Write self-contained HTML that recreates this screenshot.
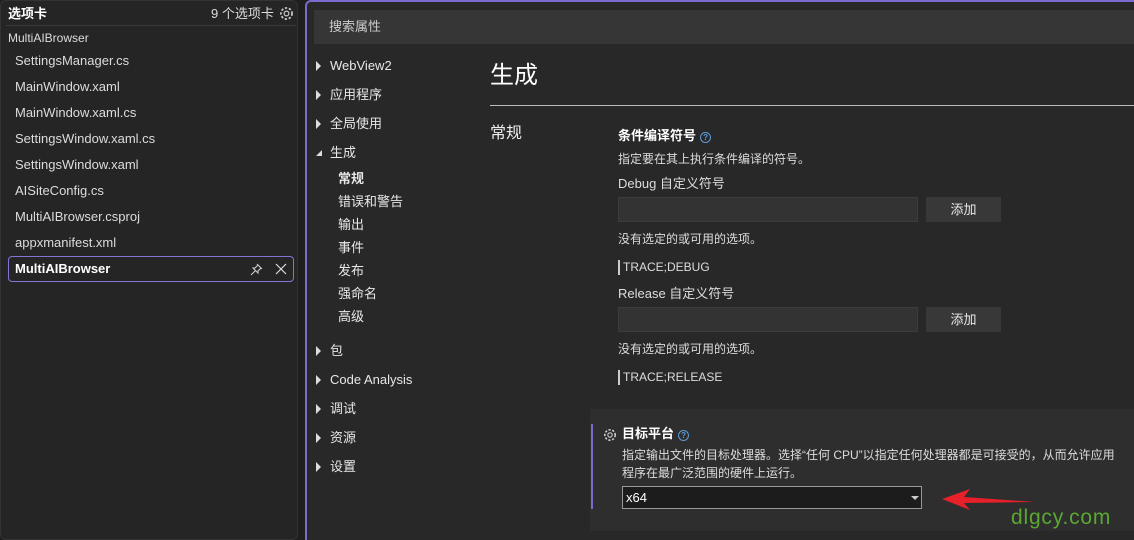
<!DOCTYPE html>
<html><head><meta charset="utf-8"><style>
*{margin:0;padding:0;box-sizing:border-box}
body{width:1134px;height:531px;background:#1f1f1f;font-family:"Liberation Sans","Noto Sans CJK SC",sans-serif;color:#e0e0e0;font-size:13px;line-height:16px;position:relative;overflow:hidden}
.a{position:absolute;white-space:nowrap}
#left{position:absolute;left:0;top:0;width:298px;height:540px;background:#252525;border:1px solid #333;border-radius:6px}
#right{position:absolute;left:305px;top:0;width:840px;height:540px;background:#282828;border-left:2px solid #7b6bd0;border-top:2px solid #7b6bd0;border-radius:6px 0 0 0}
.f{left:15px;font-size:13px;color:#dcdcdc}
.n{font-size:13px;color:#e8e8e8}
.tri{position:absolute;left:316px;width:0;height:0;border-left:5px solid #ddd;border-top:5px solid transparent;border-bottom:5px solid transparent}
.box{position:absolute;background:#333;border:1px solid #3c3c3c}
.btn{position:absolute;background:#383838;color:#e8e8e8;text-align:center;font-size:13px}
.q{display:inline-block;width:11px;height:11px;border:1px solid #5b9bd5;border-radius:50%;font-size:8px;line-height:9px;text-align:center;color:#5b9bd5;vertical-align:0px;margin-left:4px}
</style></head><body>
<div id="left"></div>
<div class="a" style="left:8px;top:6px;font-weight:bold;font-size:13px;color:#fff">选项卡</div>
<div class="a" style="left:211px;top:6px;font-size:13px;color:#ddd">9 个选项卡</div>
<svg class="a" style="left:279px;top:6px" width="15" height="15" viewBox="0 0 14 14"><circle cx="7" cy="7" r="2.2" fill="none" stroke="#ccc" stroke-width="1.1"/><circle cx="7" cy="7" r="5.2" fill="none" stroke="#ccc" stroke-width="1.6" stroke-dasharray="2.2 1.6"/></svg>
<div class="a" style="left:6px;top:25px;width:290px;height:1px;background:#3a3a3a"></div>
<div class="a" style="left:8px;top:30px;font-size:12px;color:#ddd">MultiAIBrowser</div>
<div class="a f" style="top:53px">SettingsManager.cs</div>
<div class="a f" style="top:79px">MainWindow.xaml</div>
<div class="a f" style="top:105px">MainWindow.xaml.cs</div>
<div class="a f" style="top:131px">SettingsWindow.xaml.cs</div>
<div class="a f" style="top:157px">SettingsWindow.xaml</div>
<div class="a f" style="top:183px">AISiteConfig.cs</div>
<div class="a f" style="top:209px">MultiAIBrowser.csproj</div>
<div class="a f" style="top:235px">appxmanifest.xml</div>
<div class="a" style="left:8px;top:256px;width:286px;height:26px;border:1px solid #8474d8;border-radius:4px"></div>
<div class="a" style="left:15px;top:261px;font-weight:bold;color:#fff">MultiAIBrowser</div>
<svg class="a" style="left:250px;top:263px" width="13" height="13"><path d="M7 1L12 6M8 2L5 5L3 5L8 10L8 8L11 5M5.5 7.5L1 12" stroke="#ccc" fill="none" stroke-width="1.1"/></svg>
<svg class="a" style="left:275px;top:263px" width="12" height="12"><path d="M1 1L11 11M11 1L1 11" stroke="#ddd" stroke-width="1.2"/></svg>

<div id="right"></div>
<div class="box" style="left:314px;top:10px;width:830px;height:34px;border:none;background:#363636"></div>
<div class="a" style="left:329px;top:19px;color:#ccc">搜索属性</div>

<div class="tri" style="top:61px"></div><div class="a n" style="left:330px;top:58px">WebView2</div>
<div class="tri" style="top:90px"></div><div class="a n" style="left:330px;top:87px">应用程序</div>
<div class="tri" style="top:119px"></div><div class="a n" style="left:330px;top:116px">全局使用</div>
<div class="a" style="left:316px;top:150px;width:0;height:0;border-right:6px solid #ddd;border-top:6px solid transparent"></div>
<div class="a n" style="left:330px;top:145px">生成</div>
<div class="a n" style="left:338px;top:171px;font-weight:bold">常规</div>
<div class="a n" style="left:338px;top:194px">错误和警告</div>
<div class="a n" style="left:338px;top:217px">输出</div>
<div class="a n" style="left:338px;top:240px">事件</div>
<div class="a n" style="left:338px;top:263px">发布</div>
<div class="a n" style="left:338px;top:286px">强命名</div>
<div class="a n" style="left:338px;top:309px">高级</div>
<div class="tri" style="top:346px"></div><div class="a n" style="left:330px;top:343px">包</div>
<div class="tri" style="top:375px"></div><div class="a n" style="left:330px;top:372px">Code Analysis</div>
<div class="tri" style="top:404px"></div><div class="a n" style="left:330px;top:401px">调试</div>
<div class="tri" style="top:433px"></div><div class="a n" style="left:330px;top:430px">资源</div>
<div class="tri" style="top:462px"></div><div class="a n" style="left:330px;top:459px">设置</div>

<div class="a" style="left:490px;top:62px;font-size:24px;line-height:28px;color:#fff">生成</div>
<div class="a" style="left:490px;top:105px;width:650px;height:1px;background:#bbb"></div>
<div class="a" style="left:490px;top:125px;font-size:16px;line-height:18px;color:#eee">常规</div>
<div class="a" style="left:618px;top:128px;font-weight:bold;color:#fff">条件编译符号<span class="q">?</span></div>
<div class="a" style="left:618px;top:151px;font-size:12px;color:#ddd">指定要在其上执行条件编译的符号。</div>
<div class="a" style="left:618px;top:176px;color:#ddd">Debug 自定义符号</div>
<div class="box" style="left:618px;top:197px;width:300px;height:25px"></div>
<div class="btn" style="left:926px;top:197px;width:75px;height:25px;line-height:25px">添加</div>
<div class="a" style="left:618px;top:231px;font-size:12px;color:#ddd">没有选定的或可用的选项。</div>
<div class="a" style="left:618px;top:260px;width:2px;height:15px;background:#ccc"></div>
<div class="a" style="left:623px;top:259px;font-size:12px;color:#ddd">TRACE;DEBUG</div>
<div class="a" style="left:618px;top:286px;color:#ddd">Release 自定义符号</div>
<div class="box" style="left:618px;top:307px;width:300px;height:25px"></div>
<div class="btn" style="left:926px;top:307px;width:75px;height:25px;line-height:25px">添加</div>
<div class="a" style="left:618px;top:341px;font-size:12px;color:#ddd">没有选定的或可用的选项。</div>
<div class="a" style="left:618px;top:370px;width:2px;height:15px;background:#ccc"></div>
<div class="a" style="left:623px;top:369px;font-size:12px;color:#ddd">TRACE;RELEASE</div>

<div class="a" style="left:590px;top:409px;width:550px;height:122px;background:#2e2e2e"></div>
<div class="a" style="left:591px;top:424px;width:2px;height:85px;background:#7b6bd0"></div>
<svg class="a" style="left:603px;top:428px" width="14" height="14" viewBox="0 0 14 14"><circle cx="7" cy="7" r="2.2" fill="none" stroke="#ccc" stroke-width="1.1"/><circle cx="7" cy="7" r="5.2" fill="none" stroke="#ccc" stroke-width="1.6" stroke-dasharray="2.2 1.6"/></svg>
<div class="a" style="left:622px;top:426px;font-weight:bold;color:#fff">目标平台<span class="q">?</span></div>
<div class="a" style="left:622px;top:446px;font-size:12px;color:#ddd;line-height:18px">指定输出文件的目标处理器。选择“任何 CPU”以指定任何处理器都是可接受的，从而允许应用<br>程序在最广泛范围的硬件上运行。</div>
<div class="a" style="left:622px;top:486px;width:300px;height:23px;background:#1c1c1c;border:1px solid #999"></div>
<div class="a" style="left:626px;top:490px;color:#fff">x64</div>
<div class="a" style="left:911px;top:496px;width:0;height:0;border-left:4px solid transparent;border-right:4px solid transparent;border-top:4px solid #ccc"></div>
<svg class="a" style="left:940px;top:486px" width="100" height="28"><polygon points="2,13 30,3 24,11 95,16 24,17 30,24" fill="#e8202a"/></svg>
<div class="a" style="left:1011px;top:506px;font-size:21px;line-height:24px;letter-spacing:0.8px;color:#5aa832">dlgcy.com</div>
</body></html>
